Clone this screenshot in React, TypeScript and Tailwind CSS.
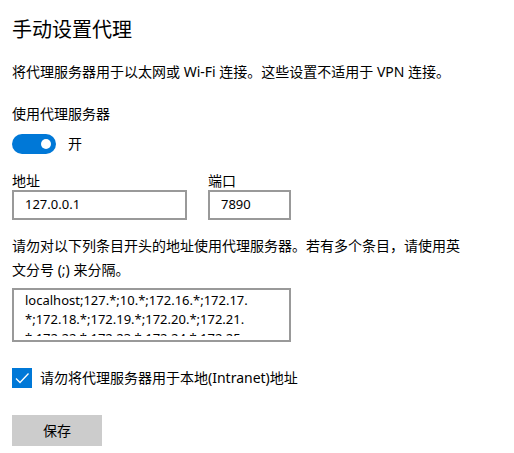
import React from "react";

const font = { fontFamily: '"Noto Sans", "Noto Sans CJK SC", sans-serif' };

export default function App() {
  return (
    <div
      className="w-[514px] h-[453px] bg-white text-black pl-[12px] pt-[16px] overflow-hidden"
      style={font}
    >
      <h1 className="text-[20px] leading-[28px] font-normal">手动设置代理</h1>
      <p className="mt-[18px] text-[14px] leading-[20px]">
        将代理服务器用于以太网或 Wi-Fi 连接。这些设置不适用于 VPN 连接。
      </p>
      <p className="mt-[22px] text-[14px] leading-[20px]">使用代理服务器</p>
      <div className="mt-[10px] flex items-center gap-[12px]">
        <div className="w-[44px] h-[20px] rounded-full bg-[#0078d7] flex items-center justify-end pr-[5px]">
          <div className="w-[10px] h-[10px] rounded-full bg-white" />
        </div>
        <span className="text-[14px] leading-[20px]">开</span>
      </div>
      <div className="mt-[18px] flex gap-[21px]">
        <div className="flex flex-col">
          <span className="text-[14px] leading-[18px]">地址</span>
          <div className="w-[175px] h-[30px] border-2 border-[#999] flex items-center px-[11px] text-[13px]">
            127.0.0.1
          </div>
        </div>
        <div className="flex flex-col">
          <span className="text-[14px] leading-[18px]">端口</span>
          <div className="w-[83px] h-[30px] border-2 border-[#999] flex items-center px-[11px] text-[13px]">
            7890
          </div>
        </div>
      </div>
      <p className="mt-[14px] w-[460px] text-[14px] leading-[24px]">
        请勿对以下列条目开头的地址使用代理服务器。若有多个条目，请使用英文分号 (;) 来分隔。
      </p>
      <div className="mt-[6px] w-[279px] h-[54px] border-2 border-[#999] pl-[11px] pt-[1px] pb-[4px] text-[13px] leading-[19px]">
        <div className="h-[45px] overflow-hidden">
          <div className="whitespace-nowrap">localhost;127.*;10.*;172.16.*;172.17.</div>
          <div className="whitespace-nowrap">*;172.18.*;172.19.*;172.20.*;172.21.</div>
          <div className="whitespace-nowrap">*;172.22.*;172.23.*;172.24.*;172.25.</div>
        </div>
      </div>
      <div className="mt-[26px] flex items-center gap-[8px]">
        <div className="w-[20px] h-[20px] bg-[#0078d7] flex items-center justify-center">
          <svg width="16" height="16" viewBox="0 0 16 16" fill="none">
            <path d="M2 8.5 L6 12.5 L14.5 3.5" stroke="white" strokeWidth="1.3" />
          </svg>
        </div>
        <span className="text-[14px] leading-[20px]">请勿将代理服务器用于本地(Intranet)地址</span>
      </div>
      <button className="mt-[27px] w-[90px] h-[31px] bg-[#cccccc] text-[14px] block">保存</button>
    </div>
  );
}
